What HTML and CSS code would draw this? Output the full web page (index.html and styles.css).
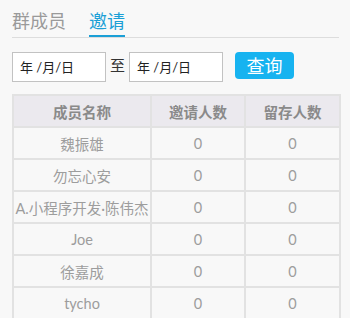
FILE: index.html
```html
<!DOCTYPE html>
<html lang="zh-CN">
<head>
<meta charset="utf-8">
<link rel="stylesheet" href="styles.css">
</head>
<body>
<div class="page">
  <div class="tabs">
    <span class="tab">群成员</span>
    <span class="tab active">邀请</span>
  </div>
  <div class="filter">
    <div class="date">年 /月/日</div>
    <span class="to">至</span>
    <div class="date">年 /月/日</div>
    <button class="btn">查询</button>
  </div>
  <table class="grid">
    <colgroup><col class="c1"><col class="c2"><col class="c3"></colgroup>
    <thead>
      <tr><th>成员名称</th><th>邀请人数</th><th>留存人数</th></tr>
    </thead>
    <tbody>
      <tr><td>魏振雄</td><td>0</td><td>0</td></tr>
      <tr><td>勿忘心安</td><td>0</td><td>0</td></tr>
      <tr><td>A.小程序开发·陈伟杰</td><td>0</td><td>0</td></tr>
      <tr><td>Joe</td><td>0</td><td>0</td></tr>
      <tr><td>徐嘉成</td><td>0</td><td>0</td></tr>
      <tr><td>tycho</td><td>0</td><td>0</td></tr>
    </tbody>
  </table>
</div>
</body>
</html>
```
FILE: styles.css
```css
html, body {
  margin: 0;
  padding: 0;
  background: #f8f8f8;
  font-family: Lato, "Noto Sans CJK SC", sans-serif;
  overflow: hidden;
}
.page {
  padding: 0 11px 0 12px;
}
.tabs {
  display: flex;
  gap: 23px;
  padding-top: 8px;
  border-bottom: 1px solid #dddddd;
}
.tab {
  font-size: 18px;
  line-height: 26px;
  color: #9a9a9a;
  padding-bottom: 1px;
  border-bottom: 2px solid transparent;
}
.tab.active {
  color: #1b9fd6;
  border-bottom-color: #1b9fd6;
}
.filter {
  display: flex;
  align-items: flex-start;
  margin-top: 14px;
}
.date {
  box-sizing: border-box;
  width: 94px;
  height: 30px;
  border: 1px solid #c2c2c2;
  background: #fff;
  font-size: 13px;
  line-height: 28px;
  padding-left: 7px;
  color: #222;
}
.to {
  font-size: 15px;
  line-height: 26px;
  color: #333;
  margin: 0 4px;
}
.btn {
  margin-left: 12px;
  width: 59px;
  height: 27px;
  border: none;
  border-radius: 4px;
  background: #17b3f0;
  color: #fff;
  font-family: "Noto Sans CJK SC", sans-serif;
  font-size: 18px;
  line-height: 27px;
  padding: 0;
}
.grid {
  margin-top: 12px;
  width: 327px;
  border-collapse: collapse;
  table-layout: fixed;
}
.c1 { width: 138px; }
.c2 { width: 94px; }
.c3 { width: 95px; }
.grid th, .grid td {
  border: 2px solid #e2e2e2;
  height: 30px;
  padding: 0;
  text-align: center;
  font-size: 14.5px;
  white-space: nowrap;
  overflow: hidden;
}
.grid th {
  background: #ebe9ee;
  color: #8a8a8a;
  font-weight: bold;
}
.grid td {
  color: #9d9d9d;
  background: #f8f8f8;
}
```
